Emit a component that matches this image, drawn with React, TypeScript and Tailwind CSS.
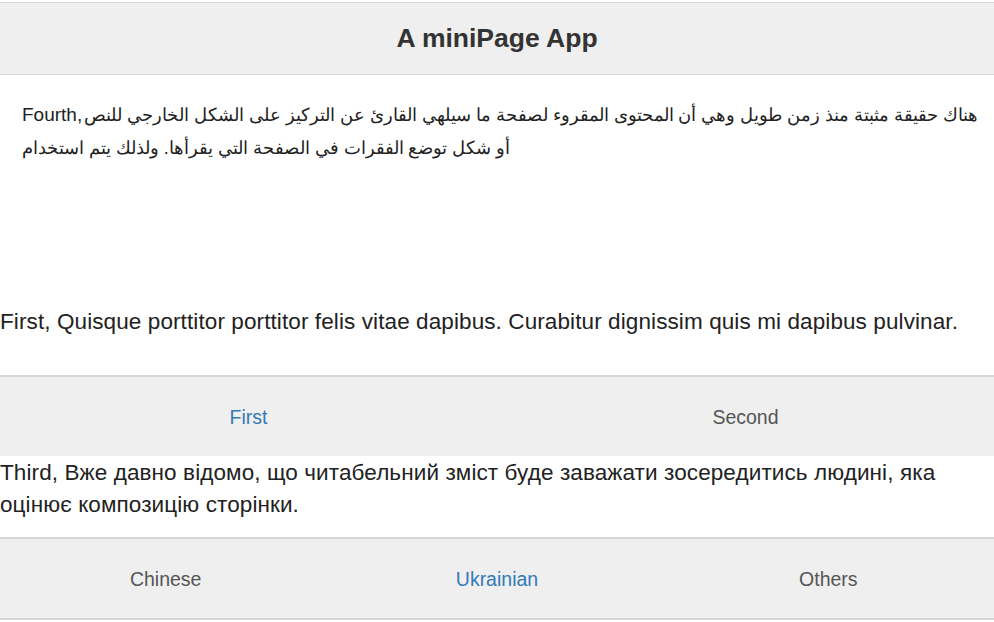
export default function App() {
  const font = { fontFamily: '"Liberation Sans", Arial, sans-serif' };
  return (
    <div className="min-h-screen bg-white text-[#333]" style={font}>
      {/* Header */}
      <div className="pt-[2px]">
        <header className="h-[73px] border-y border-[#d5d5db] bg-[#efefef] flex items-center justify-center">
          <h1 className="text-[26.5px] font-bold text-[#333]">A miniPage App</h1>
        </header>
      </div>

      {/* Fourth content */}
      <div className="h-[218px] pl-[22px] pr-[4px] pt-[23px]">
        <p dir="ltr" className="text-[17.8px] leading-[33px] text-[#222]">
          <span className="text-[19px] mr-[2px]">Fourth,</span>هناك حقيقة مثبتة منذ زمن طويل وهي أن المحتوى المقروء لصفحة ما سيلهي القارئ عن التركيز على الشكل الخارجي للنص
          <br />
          أو شكل توضع الفقرات في الصفحة التي يقرأها. ولذلك يتم استخدام
        </p>
      </div>

      {/* First */}
      <div className="h-[82px] pt-[13px]">
        <p className="text-[22.5px] leading-[32px] tracking-[0.1px] text-[#222]">
          First, Quisque porttitor porttitor felis vitae dapibus. Curabitur dignissim quis mi dapibus pulvinar.
        </p>
      </div>

      {/* Nav 1 */}
      <nav className="h-[81px] border-t-2 border-[#d6d6d6] bg-[#efefef] grid grid-cols-2 pt-[3px]">
        <a className="flex items-center justify-center text-[19.5px] text-[#337ab7]">First</a>
        <a className="flex items-center justify-center text-[19.5px] text-[#555]">Second</a>
      </nav>

      {/* Third */}
      <div className="h-[81px] pt-[1px]">
        <p className="text-[22.5px] leading-[32px] tracking-[0.1px] text-[#222]">
          Third, Вже давно відомо, що читабельний зміст буде заважати зосередитись людині, яка оцінює композицію сторінки.
        </p>
      </div>

      {/* Nav 2 */}
      <nav className="h-[83px] border-y-2 border-[#d6d6d6] bg-[#efefef] grid grid-cols-3 pt-[3px]">
        <a className="flex items-center justify-center text-[19.5px] text-[#555]">Chinese</a>
        <a className="flex items-center justify-center text-[19.5px] text-[#337ab7]">Ukrainian</a>
        <a className="flex items-center justify-center text-[19.5px] text-[#555]">Others</a>
      </nav>
    </div>
  );
}
